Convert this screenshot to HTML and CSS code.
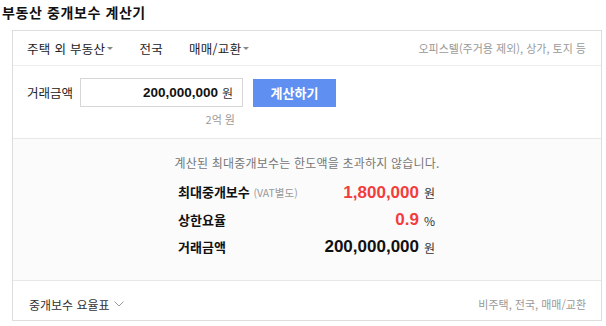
FILE: index.html
```html
<!DOCTYPE html>
<html lang="ko">
<head>
  <meta charset="UTF-8">
  <title>부동산 중개보수 계산기</title>
  <meta name="viewport" content="width=device-width, initial-scale=1.0">
  <link rel="stylesheet" href="styles.css">
</head>
<body>
<h2 class="title">부동산 중개보수 계산기</h2>
<div class="calc">
  <div class="opts">
    <span class="opt">주택 외 부동산<i class="caret"></i></span>
    <span class="opt">전국</span>
    <span class="opt">매매/교환<i class="caret"></i></span>
    <span class="opt-desc">오피스텔(주거용 제외), 상가, 토지 등</span>
  </div>

  <div class="entry">
    <div class="entry-row">
      <label class="entry-label">거래금액</label>
      <div class="amount">
        <span class="amount-num">200,000,000</span>
        <span class="amount-unit">원</span>
      </div>
      <button class="btn">계산하기</button>
    </div>
    <div class="amount-kr">2억 원</div>
  </div>

  <div class="result">
    <p class="notice">계산된 최대중개보수는 한도액을 초과하지 않습니다.</p>
    <div class="result-grid">
      <span class="r-label">최대중개보수 <small>(VAT별도)</small></span>
      <span class="r-val red">1,800,000</span>
      <span class="r-unit">원</span>

      <span class="r-label">상한요율</span>
      <span class="r-val red">0.9</span>
      <span class="r-unit">%</span>

      <span class="r-label">거래금액</span>
      <span class="r-val">200,000,000</span>
      <span class="r-unit">원</span>
    </div>
  </div>

  <div class="foot">
    <span class="foot-link">중개보수 요율표
      <svg width="10" height="6" viewBox="0 0 10 6"><path d="M0.5 0.5 L5 5 L9.5 0.5" fill="none" stroke="#999" stroke-width="1"/></svg>
    </span>
    <span class="foot-desc">비주택, 전국, 매매/교환</span>
  </div>
</div>
</body>
</html>
```

FILE: styles.css
```css
body {
  margin: 0;
  font-family: "Noto Sans CJK KR", "Noto Sans", sans-serif;
  color: #222;
  background: #fff;
}
.title {
  margin: 0;
  padding: 3px 2px 0;
  font-size: 14px;
  line-height: 18px;
  font-weight: bold;
  color: #111;
  letter-spacing: 0.6px;
}
.calc {
  margin: 9px 4px 0 12px;
  border: 1px solid #ddd;
}
.opts {
  display: flex;
  align-items: center;
  height: 34px;
  padding: 0 15px 0 14px;
  border-bottom: 1px solid #eee;
  font-size: 12.5px;
  color: #222;
}
.opt {
  display: flex;
  align-items: center;
  margin-right: 26px;
  letter-spacing: 0.3px;
}
.caret {
  display: inline-block;
  margin-left: 2px;
  border-left: 3px solid transparent;
  border-right: 3px solid transparent;
  border-top: 3px solid #888;
}
.opt-desc {
  margin-left: auto;
  font-size: 11px;
  color: #999;
}
.entry {
  padding: 12px 0 0 14px;
  height: 60px;
  border-bottom: 1px solid #e8e8e8;
}
.entry-row {
  display: flex;
  align-items: center;
}
.entry-label {
  width: 53px;
  font-size: 12.5px;
  color: #222;
}
.amount {
  display: flex;
  align-items: center;
  justify-content: flex-end;
  box-sizing: border-box;
  width: 163px;
  height: 29px;
  padding-right: 9px;
  border: 1px solid #d6d6d6;
  background: #fff;
}
.amount-num {
  font-family: "Liberation Sans", Arial, sans-serif;
  font-weight: bold;
  font-size: 13.5px;
  color: #111;
}
.amount-unit {
  margin-left: 4px;
  font-size: 12px;
  color: #333;
}
.btn {
  margin-left: 10px;
  width: 83px;
  height: 28px;
  border: none;
  background: #5f8ff0;
  color: #fff;
  font-family: inherit;
  font-size: 13px;
  font-weight: bold;
}
.amount-kr {
  width: 208px;
  margin-top: 4px;
  text-align: right;
  font-size: 11px;
  color: #999;
}
.result {
  background: #fbfbfb;
  height: 142px;
  box-sizing: border-box;
  padding-top: 15px;
  border-bottom: 1px solid #e8e8e8;
}
.notice {
  margin: 0;
  text-align: center;
  font-size: 12px;
  letter-spacing: 0.2px;
  color: #777;
}
.result-grid {
  display: grid;
  grid-template-columns: 140px 96px 12px;
  column-gap: 5px;
  row-gap: 5px;
  justify-content: center;
  margin-top: 10px;
  align-items: center;
}
.r-label {
  font-size: 13px;
  font-weight: bold;
  color: #111;
  line-height: 22px;
}
.r-label small {
  font-size: 10.5px;
  font-weight: normal;
  color: #999;
}
.r-val {
  text-align: right;
  font-family: "Liberation Sans", Arial, sans-serif;
  font-weight: bold;
  font-size: 17px;
  color: #111;
}
.red {
  color: #f33c3c;
}
.r-unit {
  font-size: 12px;
  color: #333;
}
.foot {
  display: flex;
  align-items: center;
  justify-content: space-between;
  height: 39px;
  padding: 7px 15px 0 16px;
  box-sizing: border-box;
}
.foot-link {
  display: flex;
  align-items: center;
  gap: 4px;
  font-size: 12px;
  color: #333;
}
.foot-desc {
  font-size: 11px;
  color: #999;
}
```
